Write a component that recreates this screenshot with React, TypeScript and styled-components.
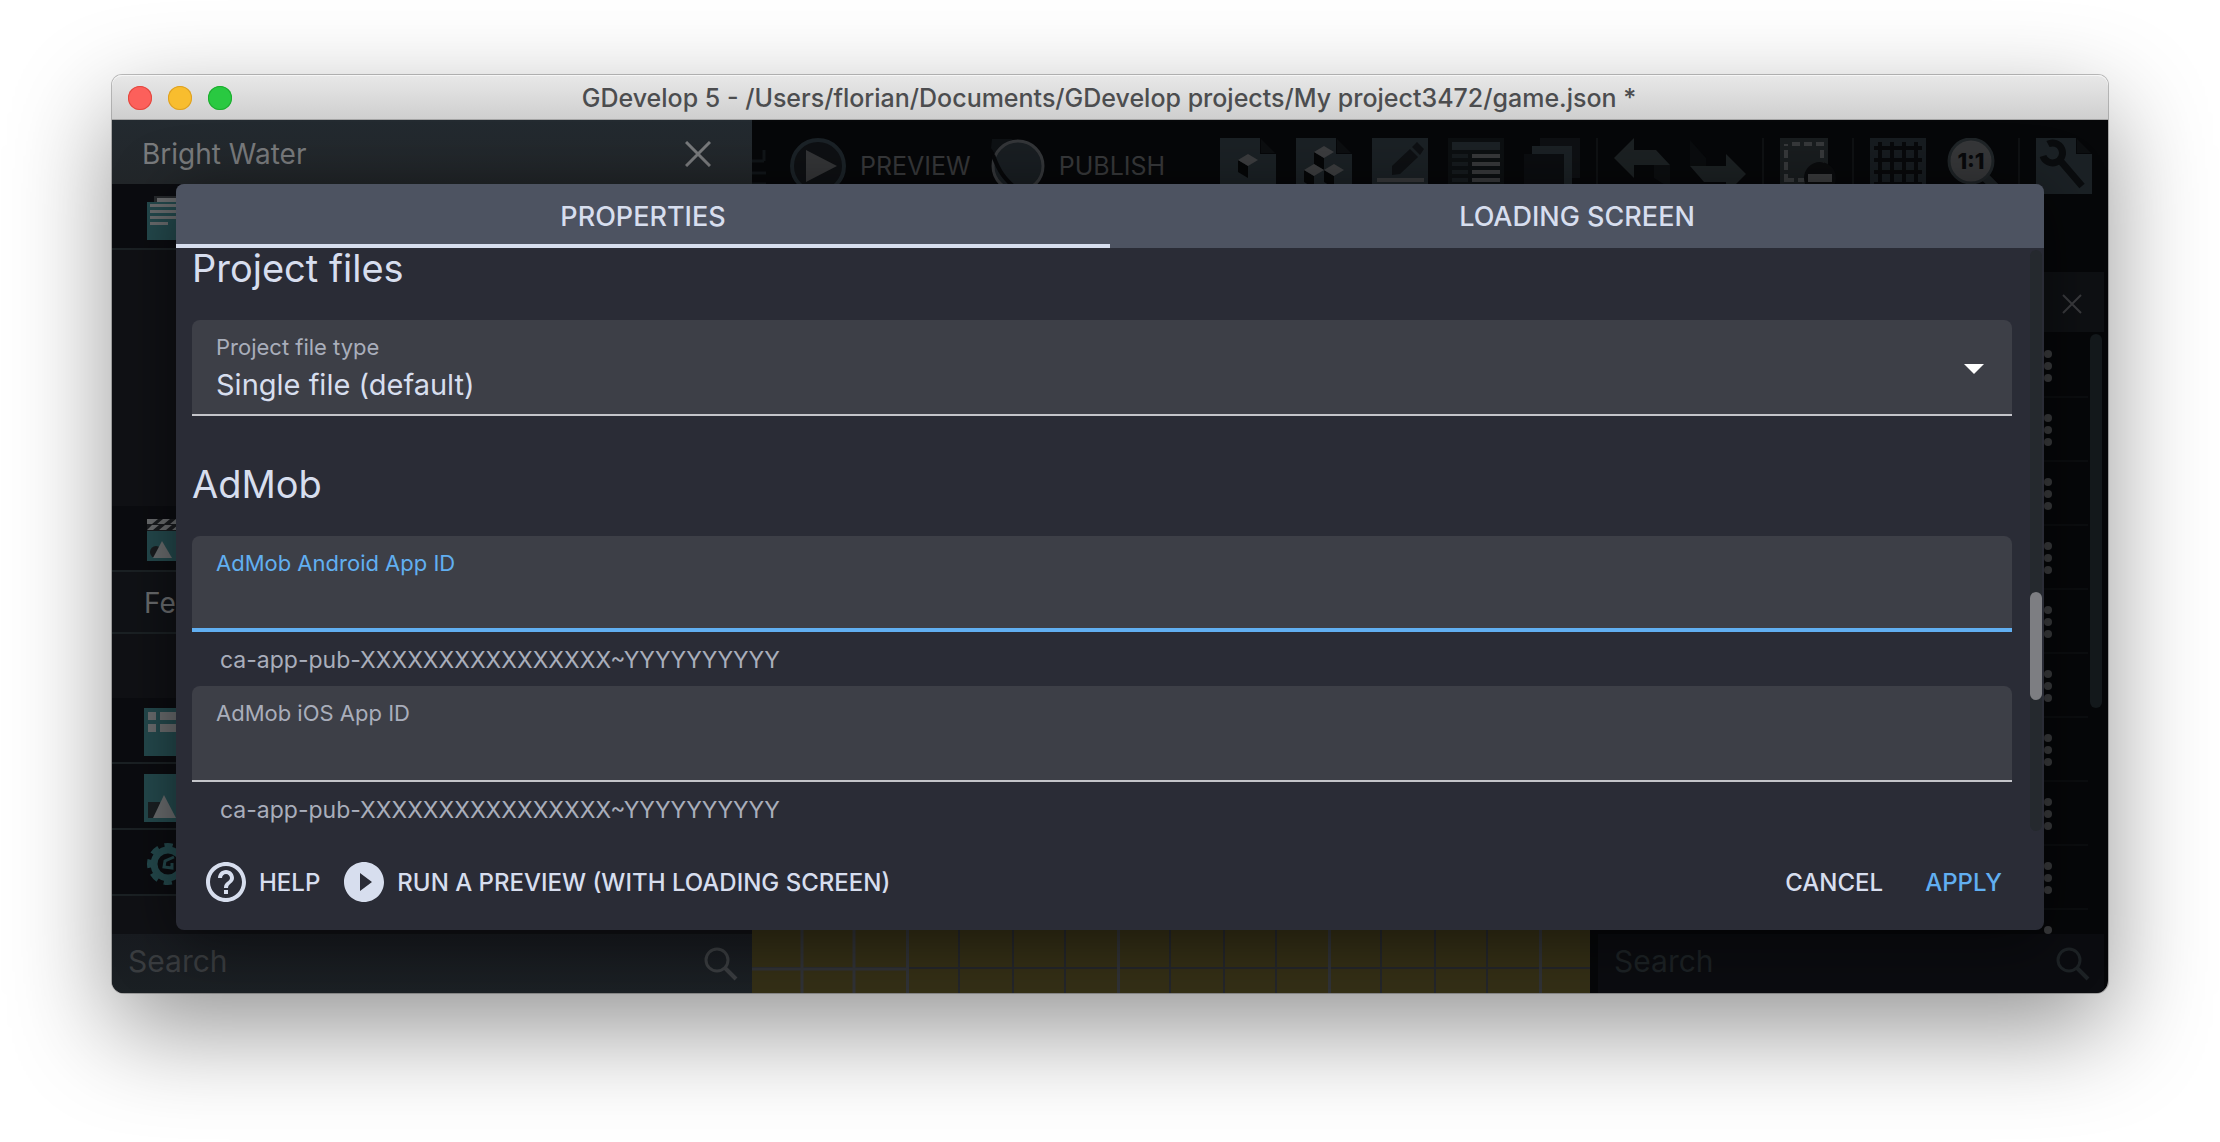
import React from 'react';
import styled, { createGlobalStyle } from 'styled-components';

const c = {
  text: '#d7deee',
  muted: '#a9aebb',
  accent: '#61aff1',
  modal: '#2a2c36',
  tabs: '#4d5361',
  field: '#3d3f47',
  teal: '#24494d',
  glyph: '#6a6c6e',
  doc: '#1b2125',
  dark: '#0e1013',
};

const GlobalStyle = createGlobalStyle`
  *, *::before, *::after { box-sizing: border-box; }
  body { margin: 0; background: #fff; font-family: Inter, "Liberation Sans", sans-serif; }
  button, input, select { font: inherit; color: inherit; border: 0; background: none; padding: 0; margin: 0; outline: 0; }
  svg { display: block; flex: none; }
`;

const Page = styled.main`
  display: flex;
  height: 100vh;
  min-height: 1000px;
  padding: 75px 112px 149px;
  overflow: hidden;
`;

const Window = styled.div`
  flex: 1;
  min-width: 0;
  display: flex;
  flex-direction: column;
  border-radius: 10px 10px 12px 12px;
  box-shadow: 0 0 0 1px rgba(0, 0, 0, 0.24), 0 36px 100px rgba(0, 0, 0, 0.42);
`;

const TitleBar = styled.header`
  flex: none;
  display: grid;
  grid-template-columns: 120px 1fr 120px;
  align-items: center;
  height: 45px;
  padding: 2px 18px 0 16px;
  border-radius: 10px 10px 0 0;
  border-bottom: 1px solid #a5a5a5;
  background: linear-gradient(#e8e8e8, #cfcfcf);
  box-shadow: inset 0 1px 0 #f6f6f6;
`;

const Lights = styled.div`
  display: flex;
  gap: 16px;
`;

const Light = styled.button<{ $fill: string; $edge: string }>`
  width: 24px;
  height: 24px;
  border-radius: 50%;
  background: ${(p) => p.$fill};
  box-shadow: inset 0 0 0 1px ${(p) => p.$edge};
`;

const Title = styled.h1`
  margin: 0;
  font-size: 25px;
  line-height: 32px;
  font-weight: 500;
  text-align: center;
  white-space: nowrap;
  color: #4c4d4f;
`;

const AppArea = styled.div`
  position: relative;
  flex: 1;
  min-height: 0;
  display: flex;
  border-radius: 0 0 12px 12px;
  background: #060709;
  overflow: hidden;
`;

const SidePanel = styled.aside`
  width: 640px;
  flex: none;
  display: flex;
  flex-direction: column;
  background: #101115;
`;

const SideHeader = styled.div`
  display: flex;
  align-items: center;
  justify-content: space-between;
  height: 64px;
  padding: 4px 41px 0 30px;
  background: linear-gradient(#232a30, #222629);
  color: #797b7d;
  font-size: 28px;
  line-height: 40px;
`;

const SideRow = styled.div<{ $height?: number; $group?: boolean }>`
  display: flex;
  align-items: center;
  height: ${(p) => p.$height ?? 66}px;
  padding: ${(p) => (p.$group ? 2 : 4)}px 0 0 32px;
  border-bottom: 2px solid #1b2124;
  background: ${(p) => (p.$group ? '#101216' : '#0b0c10')};
  color: ${c.glyph};
  font-size: 28px;
  line-height: 40px;
  white-space: nowrap;
`;

const SideGap = styled.div<{ $height: number }>`
  height: ${(p) => p.$height}px;
`;

const SearchBar = styled.label<{ $side?: boolean }>`
  flex: none;
  display: flex;
  align-items: center;
  height: 59px;
  margin-top: auto;
  padding: 0 14px 0 16px;
  background: ${(p) => (p.$side ? 'linear-gradient(#181b20, #1b2024)' : '#0b0c10')};
  color: ${(p) => (p.$side ? '#3a3d40' : '#1d2225')};
`;

const SearchInput = styled.input`
  flex: 1;
  min-width: 0;
  height: 56px;
  padding-bottom: 6px;
  font-size: 30px;
  &::placeholder { color: inherit; opacity: 1; }
`;

const Workspace = styled.div`
  flex: 1;
  min-width: 0;
  display: flex;
  flex-direction: column;
`;

const Toolbar = styled.div`
  flex: none;
  display: flex;
  align-items: flex-start;
  height: 152px;
  padding: 18px 16px 0 0;
`;

const ToolEdge = styled.div`
  width: 38px;
`;

const ToolButton = styled.button`
  display: flex;
  align-items: center;
  gap: 14px;
  height: 56px;
  margin-right: 18px;
  font-size: 25px;
  color: #37383a;
`;

const ToolGroups = styled.div`
  display: flex;
  margin-left: auto;
`;

const ToolGroup = styled.div`
  display: flex;
  gap: 20px;
  & + & { margin-left: 16px; padding-left: 16px; border-left: 2px solid #0f1113; }
`;

const IconButton = styled.button`
  width: 56px;
  height: 56px;
`;

const Docks = styled.div`
  flex: 1;
  min-height: 0;
  display: flex;
  gap: 8px;
`;

const Canvas = styled.div`
  flex: 1;
  min-width: 0;
  display: flex;
  align-items: flex-end;
`;

const ObjectsPanel = styled.aside`
  width: 510px;
  flex: none;
  display: flex;
  flex-direction: column;
  padding-right: 4px;
`;

const ObjectsHeader = styled.div`
  flex: none;
  display: flex;
  align-items: center;
  justify-content: flex-end;
  height: 60px;
  padding: 4px 22px 0 0;
  background: #0e1013;
  color: #3a3b3e;
`;

const ObjectsBody = styled.div`
  flex: 1;
  min-height: 0;
  display: flex;
  overflow: hidden;
`;

const ObjectList = styled.ul`
  flex: 1;
  list-style: none;
  margin: 0;
  padding: 2px 0 0;
`;

const ObjectItem = styled.li`
  display: flex;
  align-items: center;
  justify-content: flex-end;
  height: 64px;
  padding-right: 36px;
  border-bottom: 2px solid #0b0d0f;
`;

const Kebab = styled.button`
  display: grid;
  gap: 4px;
  padding-top: 2px;
`;

const Dot = styled.span`
  width: 8px;
  height: 8px;
  border-radius: 50%;
  background: #3a3b3d;
`;

const ObjectsThumb = styled.div`
  width: 12px;
  height: 374px;
  margin: 2px 2px 0;
  border-radius: 6px;
  background: #14191c;
`;

const Modal = styled.section`
  position: absolute;
  inset: 64px 64px 63px;
  display: flex;
  flex-direction: column;
  border-radius: 8px;
  background: ${c.modal};
  color: ${c.text};
  box-shadow: 0 10px 60px rgba(0, 0, 0, 0.5);
  overflow: hidden;
`;

const Tabs = styled.div`
  display: flex;
  flex: none;
  background: ${c.tabs};
`;

const Tab = styled.button<{ $active?: boolean }>`
  flex: 1;
  height: 64px;
  padding-top: 4px;
  border-bottom: 4px solid ${(p) => (p.$active ? c.text : 'transparent')};
  font-size: 27px;
  font-weight: 500;
  color: ${c.text};
`;

const ModalBody = styled.div`
  flex: 1;
  min-height: 0;
  display: flex;
  padding: 0 2px 0 16px;
`;

const Form = styled.form`
  flex: 1;
  min-width: 0;
  margin-right: 18px;
`;

const Heading = styled.h2`
  margin: 0 0 32px;
  font-size: 38px;
  line-height: 40px;
  font-weight: 400;
  * + & { margin-top: 48px; }
`;

const Field = styled.div<{ $focused?: boolean }>`
  display: flex;
  flex-direction: column;
  height: 96px;
  padding: 13px 24px 0;
  border-radius: 8px 8px 0 0;
  border-bottom: ${(p) => (p.$focused ? `4px solid ${c.accent}` : '2px solid #c4c5ca')};
  background: ${c.field};
`;

const FieldLabel = styled.label<{ $focused?: boolean }>`
  font-size: 22px;
  line-height: 28px;
  color: ${(p) => (p.$focused ? c.accent : c.muted)};
`;

const TextInput = styled.input`
  height: 36px;
  margin-top: 4px;
  font-size: 29px;
`;

const SelectRow = styled.div`
  display: flex;
  align-items: center;
  margin-top: 4px;
`;

const Select = styled.select`
  flex: 1;
  height: 40px;
  appearance: none;
  font-size: 29px;
  line-height: 40px;
`;

const CaretIcon = styled.svg`
  margin: -32px 4px 0 0;
  pointer-events: none;
`;

const Helper = styled.p`
  margin: 0;
  padding: 2px 0 0 28px;
  font-size: 23px;
  line-height: 52px;
  color: ${c.muted};
`;

const Track = styled.div`
  width: 12px;
  margin: 2px 0 3px;
  padding-top: 342px;
  border-radius: 6px;
  background: #25292e;
`;

const Thumb = styled.div`
  height: 108px;
  border-radius: 6px;
  background: #7d7e82;
`;

const Footer = styled.footer`
  flex: none;
  display: flex;
  align-items: center;
  justify-content: space-between;
  height: 96px;
  padding: 0 42px 0 30px;
`;

const Actions = styled.div<{ $gap: number }>`
  display: flex;
  gap: ${(p) => p.$gap}px;
`;

const FooterButton = styled.button<{ $accent?: boolean }>`
  display: flex;
  align-items: center;
  gap: 13px;
  height: 64px;
  font-size: 24px;
  font-weight: 500;
  white-space: nowrap;
  color: ${(p) => (p.$accent ? c.accent : c.text)};
`;

const Close = ({ size, width }: { size: number; width: number }) => (
  <svg width={size} height={size} viewBox={`0 0 ${size} ${size}`} fill="none" stroke="currentColor" strokeWidth={width}>
    <path d={`M1 1L${size - 1} ${size - 1}M${size - 1} 1L1 ${size - 1}`} />
  </svg>
);

const Magnifier = () => (
  <svg width="34" height="34" viewBox="0 0 34 34" fill="none" stroke="currentColor">
    <circle cx="13" cy="13" r="11" strokeWidth="3" />
    <path d="M21 21L32 32" strokeWidth="4" />
  </svg>
);

const SettingsPages = () => (
  <svg width="54" height="48" viewBox="0 0 54 48">
    <path d="M10 2H54V14H10z" fill="#26292c" />
    <path d="M13 4H54V8H13z" fill={c.glyph} />
    <path d="M3 8H54V46H3z" fill={c.teal} />
    <path d="M6 10H54V13H6zM6 16H54V19H6zM6 22H54V25H6zM6 28H24V31H6z" fill={c.glyph} />
  </svg>
);

const Clapper = () => (
  <svg width="54" height="48" viewBox="0 0 54 48">
    <path d="M3 3H54V15H3z" fill="#1a1c1f" />
    <path d="M3 3H9L14 3L8 8H3zM19 3H26L20 8H13zM32 3H39L33 8H26zM3 14L8 9H15L9 14zM15 14L21 9H28L22 14zM28 14L34 9H41L35 14z" fill={c.glyph} />
    <path d="M3 15H54V45H3z" fill={c.teal} />
    <circle cx="12" cy="36" r="6" fill="#1a1c1f" />
    <path d="M18 25L28 42H9z" fill={c.glyph} />
  </svg>
);

const EventsIcon = () => (
  <svg width="54" height="48" viewBox="0 0 54 48">
    <path d="M0 0H54V48H0z" fill={c.teal} />
    <path d="M4 4H12V12H4zM16 4H54V12H16zM4 16H12V24H4zM16 16H54V24H16z" fill={c.glyph} />
  </svg>
);

const LayoutIcon = () => (
  <svg width="54" height="48" viewBox="0 0 54 48">
    <path d="M0 0H54V48H0z" fill={c.teal} />
    <path d="M4 28H16V44H4z" fill="#1a1f22" />
    <path d="M20 21L32 44H9z" fill={c.glyph} />
  </svg>
);

const GearIcon = () => (
  <svg width="54" height="48" viewBox="0 0 54 48" fill="none" stroke={c.teal}>
    <circle cx="24" cy="24" r="14" strokeWidth="7" />
    <circle cx="24" cy="24" r="18" strokeWidth="6" strokeDasharray="8 6.137" strokeDashoffset="4" />
    <path d="M30 17L21 21L20 27L28 28L28 23" strokeWidth="3" />
  </svg>
);

const PreviewIcon = () => (
  <svg width="56" height="56" viewBox="0 0 56 56">
    <circle cx="28" cy="28" r="26" fill={c.dark} stroke="#1b2227" strokeWidth="4" />
    <path d="M16 12L47 28L16 44z" fill="#343537" />
  </svg>
);

const PublishIcon = () => (
  <svg width="56" height="56" viewBox="0 0 56 56">
    <path d="M3 1H24L6 16L2 10z" fill="#0e1114" />
    <circle cx="29" cy="28" r="25" fill="#191e22" stroke="#343639" strokeWidth="3" />
    <path d="M4 17C10 34 16 42 30 53" fill="none" stroke="#07080a" strokeWidth="4" />
  </svg>
);

const Cube = ({ x, y }: { x: number; y: number }) => (
  <g>
    <path d={`M${x} ${y + 6}L${x + 10} ${y + 12}V${y + 24}L${x} ${y + 18}z`} fill="#050607" />
    <path d={`M${x} ${y + 6}L${x + 10} ${y}L${x + 20} ${y + 6}L${x + 10} ${y + 12}z`} fill="#3c3d3f" />
  </g>
);

const Sheet = () => (
  <g>
    <path d="M0 0H40V16H56V56H0z" fill={c.doc} />
    <path d="M41 1L55 15H41z" fill="#0c0e10" />
  </g>
);

const icons: Record<string, React.ReactNode> = {
  'Add object': <><Sheet /><Cube x={18} y={16} /></>,
  'Object groups': <><Sheet /><Cube x={18} y={8} /><Cube x={8} y={26} /><Cube x={28} y={26} /></>,
  Edit: (
    <>
      <path d="M0 0H56V56H0z" fill={c.doc} />
      <path d="M20 28L38 11L46 19L28 36L20 37zM40 9L45 4L52 11L48 17z" fill={c.dark} />
      <path d="M5 40H52V44H5z" fill="#37383a" />
    </>
  ),
  Instances: (
    <>
      <path d="M0 0H56V56H0z" fill="#0c0f11" />
      <path d="M4 4H52V12H4z" fill={c.doc} />
      <path d="M4 16H20V20H4zM4 24H20V28H4zM4 32H20V36H4zM4 40H20V44H4z" fill="#161b1e" />
      <path d="M24 16H52V20H24zM24 24H52V28H24zM24 32H52V36H24zM24 40H52V44H24z" fill="#37383a" />
    </>
  ),
  Layers: (
    <>
      <path d="M16 0H56V40H16z" fill="#0e1013" />
      <path d="M8 8H48V56H8z" fill={c.doc} />
      <path d="M0 16H40V56H0z" fill="#0b0d10" />
    </>
  ),
  Undo: (
    <>
      <path d="M40 27H56V50L40 40z" fill="#0c0e10" />
      <path d="M0 20L20 0V12H42L56 27H20V40z" fill="#1c2123" />
    </>
  ),
  Redo: (
    <>
      <path d="M0 2L16 20V28H0z" fill="#0a0c0e" />
      <path d="M0 28H36V16L56 36L36 56V44H14z" fill="#1c2123" />
    </>
  ),
  'Toggle mask': (
    <>
      <path d="M0 0H48V56H0z" fill="#191d1f" />
      <path d="M6 44V6M12 6H46M42 12V30M6 42H28" fill="none" stroke="#37393b" strokeWidth="4" strokeDasharray="8 4" />
      <circle cx="40" cy="40" r="16" fill="#0a0b0d" />
      <path d="M28 36H52V44H28z" fill="#3a3b3d" />
    </>
  ),
  'Toggle grid': (
    <>
      <path d="M0 0H56V56H0z" fill="#171c20" />
      <path d="M10 4V56M22 4V56M34 4V56M46 4V56M4 10H52M4 22H52M4 34H52M4 46H52" stroke="#08090b" strokeWidth="4" />
    </>
  ),
  'Zoom to fit': (
    <>
      <path d="M38 38L56 56" stroke="#1c2124" strokeWidth="9" />
      <circle cx="25" cy="23" r="22" fill="#363739" stroke="#1f2427" strokeWidth="3" />
      <text x="25" y="31" textAnchor="middle" fontSize="22" fontWeight="800" fill="#08090b">1:1</text>
    </>
  ),
  'Scene settings': (
    <>
      <Sheet />
      <path d="M12 6A10 10 0 1 1 7 18M22 20L46 48" fill="none" stroke="#0a0c0e" strokeWidth="7" />
    </>
  ),
};

const toolGroups = [
  ['Add object', 'Object groups', 'Edit', 'Instances', 'Layers'],
  ['Undo', 'Redo'],
  ['Toggle mask'],
  ['Toggle grid', 'Zoom to fit'],
  ['Scene settings'],
];

const SceneTiles = () => (
  <svg width="100%" height="66">
    <defs>
      <pattern id="tile" width="211" height="66" x="154" patternUnits="userSpaceOnUse">
        <path d="M0 0H211V66H0z" fill="#342f16" />
        <path d="M53 0V66M107 0V66M159 0V66M0 41H211" stroke="#24262a" strokeWidth="2" />
        <path d="M1 0V66" stroke="#303236" strokeWidth="4" />
      </pattern>
    </defs>
    <path d="M0 0H3000V66H0z" fill="url(#tile)" />
    <path d="M50 0V66M102 0V66M0 42H154" stroke="#303236" strokeWidth="3" />
  </svg>
);

const HelpIcon = () => (
  <svg width="40" height="40" viewBox="2 2 20 20" fill="currentColor">
    <path d="M11 18h2v-2h-2v2zm1-16C6.48 2 2 6.48 2 12s4.48 10 10 10 10-4.48 10-10S17.52 2 12 2zm0 18c-4.41 0-8-3.59-8-8s3.59-8 8-8 8 3.59 8 8-3.59 8-8 8zm0-14c-2.21 0-4 1.79-4 4h2c0-1.1.9-2 2-2s2 .9 2 2c0 2-3 1.75-3 5h2c0-2.25 3-2.5 3-5 0-2.21-1.79-4-4-4z" />
  </svg>
);

const PlayIcon = () => (
  <svg width="40" height="40" viewBox="2 2 20 20" fill="currentColor">
    <path d="M12 2C6.48 2 2 6.48 2 12s4.48 10 10 10 10-4.48 10-10S17.52 2 12 2zm-2 14.5v-9l6 4.5-6 4.5z" />
  </svg>
);

export default function App() {
  return (
    <>
      <GlobalStyle />
      <Page>
        <Window>
          <TitleBar>
            <Lights>
              <Light aria-label="Close window" $fill="#fc605b" $edge="#e2483f" />
              <Light aria-label="Minimize window" $fill="#f8bd2e" $edge="#dda023" />
              <Light aria-label="Zoom window" $fill="#29c941" $edge="#1dac2f" />
            </Lights>
            <Title>GDevelop 5 - /Users/florian/Documents/GDevelop projects/My project3472/game.json *</Title>
          </TitleBar>
          <AppArea>
            <SidePanel>
              <SideHeader>
                Bright Water
                <button aria-label="Close project manager"><Close size={26} width={3} /></button>
              </SideHeader>
              <SideRow><SettingsPages /></SideRow>
              <SideGap $height={256} />
              <SideRow><Clapper /></SideRow>
              <SideRow $height={62} $group>Fee</SideRow>
              <SideGap $height={64} />
              <SideRow><EventsIcon /></SideRow>
              <SideRow><LayoutIcon /></SideRow>
              <SideRow><GearIcon /></SideRow>
              <SearchBar $side>
                <SearchInput placeholder="Search" aria-label="Search project" />
                <Magnifier />
              </SearchBar>
            </SidePanel>
            <Workspace>
              <Toolbar>
                <ToolEdge>
                  <svg width="14" height="48" viewBox="0 0 14 48">
                    <path d="M0 23H12M12 12V23M0 35H14M0 46H14" stroke="#111518" strokeWidth="3" fill="none" />
                  </svg>
                </ToolEdge>
                <ToolButton><PreviewIcon />PREVIEW</ToolButton>
                <ToolButton><PublishIcon />PUBLISH</ToolButton>
                <ToolGroups>
                  {toolGroups.map((group) => (
                    <ToolGroup key={group[0]}>
                      {group.map((name) => (
                        <IconButton key={name} aria-label={name}>
                          <svg width="56" height="56" viewBox="0 0 56 56">{icons[name]}</svg>
                        </IconButton>
                      ))}
                    </ToolGroup>
                  ))}
                </ToolGroups>
              </Toolbar>
              <Docks>
                <Canvas><SceneTiles /></Canvas>
                <ObjectsPanel>
                  <ObjectsHeader>
                    <button aria-label="Close objects"><Close size={20} width={2} /></button>
                  </ObjectsHeader>
                  <ObjectsBody>
                    <ObjectList>
                      {Array.from({ length: 10 }, (_, i) => (
                        <ObjectItem key={i}>
                          <Kebab aria-label="Object menu"><Dot /><Dot /><Dot /></Kebab>
                        </ObjectItem>
                      ))}
                    </ObjectList>
                    <ObjectsThumb />
                  </ObjectsBody>
                  <SearchBar>
                    <SearchInput placeholder="Search" aria-label="Search objects" />
                    <Magnifier />
                  </SearchBar>
                </ObjectsPanel>
              </Docks>
            </Workspace>
            <Modal role="dialog" aria-label="Project properties">
              <Tabs role="tablist">
                <Tab role="tab" aria-selected $active>PROPERTIES</Tab>
                <Tab role="tab">LOADING SCREEN</Tab>
              </Tabs>
              <ModalBody>
                <Form>
                  <Heading>Project files</Heading>
                  <Field>
                    <FieldLabel htmlFor="file-type">Project file type</FieldLabel>
                    <SelectRow>
                      <Select id="file-type"><option>Single file (default)</option></Select>
                      <CaretIcon width="20" height="10" viewBox="0 0 20 10"><path d="M0 0H20L10 10z" fill="#fff" /></CaretIcon>
                    </SelectRow>
                  </Field>
                  <Heading>AdMob</Heading>
                  <Field $focused>
                    <FieldLabel htmlFor="android-id" $focused>AdMob Android App ID</FieldLabel>
                    <TextInput id="android-id" />
                  </Field>
                  <Helper>ca-app-pub-XXXXXXXXXXXXXXXX~YYYYYYYYYY</Helper>
                  <Field>
                    <FieldLabel htmlFor="ios-id">AdMob iOS App ID</FieldLabel>
                    <TextInput id="ios-id" />
                  </Field>
                  <Helper>ca-app-pub-XXXXXXXXXXXXXXXX~YYYYYYYYYY</Helper>
                </Form>
                <Track><Thumb /></Track>
              </ModalBody>
              <Footer>
                <Actions $gap={24}>
                  <FooterButton><HelpIcon />HELP</FooterButton>
                  <FooterButton><PlayIcon />RUN A PREVIEW (WITH LOADING SCREEN)</FooterButton>
                </Actions>
                <Actions $gap={42}>
                  <FooterButton>CANCEL</FooterButton>
                  <FooterButton $accent>APPLY</FooterButton>
                </Actions>
              </Footer>
            </Modal>
          </AppArea>
        </Window>
      </Page>
    </>
  );
}
